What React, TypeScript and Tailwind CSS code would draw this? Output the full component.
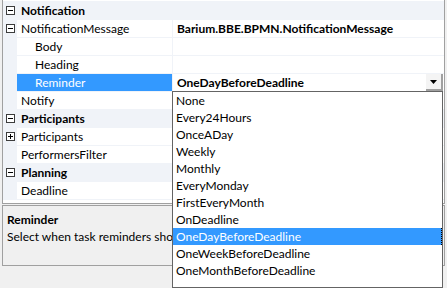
import React from "react";

type Row = {
  kind: "cat" | "prop";
  label: string;
  value?: string;
  glyph?: "minus" | "plus";
  indent?: boolean;
  selected?: boolean;
  dropdown?: boolean;
};

const rows: Row[] = [
  { kind: "cat", label: "Notification", glyph: "minus" },
  { kind: "prop", label: "NotificationMessage", value: "Barium.BBE.BPMN.NotificationMessage", glyph: "minus" },
  { kind: "prop", label: "Body", indent: true },
  { kind: "prop", label: "Heading", indent: true },
  { kind: "prop", label: "Reminder", indent: true, selected: true, value: "OneDayBeforeDeadline", dropdown: true },
  { kind: "prop", label: "Notify" },
  { kind: "cat", label: "Participants", glyph: "minus" },
  { kind: "prop", label: "Participants", glyph: "plus" },
  { kind: "prop", label: "PerformersFilter" },
  { kind: "cat", label: "Planning", glyph: "minus" },
  { kind: "prop", label: "Deadline" },
];

const options = [
  "None",
  "Every24Hours",
  "OnceADay",
  "Weekly",
  "Monthly",
  "EveryMonday",
  "FirstEveryMonth",
  "OnDeadline",
  "OneDayBeforeDeadline",
  "OneWeekBeforeDeadline",
  "OneMonthBeforeDeadline",
];

function Glyph({ type }: { type: "minus" | "plus" }) {
  return (
    <svg width="9" height="9" viewBox="0 0 9 9" className="block">
      <rect x="0.5" y="0.5" width="8" height="8" fill="white" stroke="#3c3c3c" />
      <line x1="2" y1="4.5" x2="7" y2="4.5" stroke="#000" />
      {type === "plus" && <line x1="4.5" y1="2" x2="4.5" y2="7" stroke="#000" />}
    </svg>
  );
}

function GridRow({ row }: { row: Row }) {
  if (row.kind === "cat") {
    return (
      <div className="flex h-[18px] items-center border-t border-[#f0f3f8] bg-[#f0f3f8]">
        <div className="flex w-[14px] shrink-0 justify-center pl-[1px]">
          {row.glyph && <Glyph type={row.glyph} />}
        </div>
        <div className="pl-[4px] font-bold text-black">{row.label}</div>
      </div>
    );
  }
  return (
    <div className="flex h-[18px] border-t border-[#f0f3f8]">
      <div className="flex w-[14px] shrink-0 items-center justify-center bg-[#f0f3f8] pl-[1px]">
        {row.glyph && <Glyph type={row.glyph} />}
      </div>
      <div
        className={
          "flex w-[155px] shrink-0 items-center whitespace-nowrap " +
          (row.indent ? "pl-[18px] " : "pl-[4px] ") +
          (row.selected ? "bg-[#3399ff] text-white" : "bg-white text-black")
        }
      >
        {row.label}
      </div>
      <div className="relative flex flex-1 items-center border-l border-[#f0f3f8] bg-white pl-[4px] font-bold text-black whitespace-nowrap">
        {row.value}
        {row.dropdown && (
          <div className="absolute right-[1px] top-0 flex h-[17px] w-[17px] items-center justify-center border-b-2 border-r-2 border-[#a0a0a0] bg-[#f4f4f4]">
            <svg width="7" height="4" viewBox="0 0 7 4">
              <path d="M0 0h7L3.5 4z" fill="#000" />
            </svg>
          </div>
        )}
      </div>
    </div>
  );
}

export default function App() {
  return (
    <div className="relative h-[288px] w-[447px] overflow-hidden bg-[#f0f0f0] font-['Lato',sans-serif] text-[12px] leading-none">
      <div className="ml-[2px] w-[443px] border-x border-b border-[#a0a0a0] bg-white">
        <div className="h-[1px] bg-white" />
        {rows.map((r, i) => (
          <GridRow key={i} row={r} />
        ))}
        <div className="h-[4px] border-t border-[#f0f3f8] bg-white" />
      </div>

      <div className="ml-[2px] mt-[1px] h-[61px] w-[443px] border border-[#a0a0a0] bg-[#f0f0f0] px-[4px] pt-[8px] text-black">
        <div className="font-bold">Reminder</div>
        <div className="mt-[5px] whitespace-nowrap">Select when task reminders should be sent.</div>
      </div>

      {/* open dropdown list */}
      <div className="absolute left-[172px] top-[91px] h-[197px] w-[271px] border border-[#646464] bg-white">
        {options.map((o) => (
          <div
            key={o}
            className={
              "flex h-[17px] items-center pl-[3px] " +
              (o === "OneDayBeforeDeadline"
                ? "border-r border-dotted border-black bg-[#3399ff] text-white"
                : "text-black")
            }
          >
            {o}
          </div>
        ))}
      </div>
    </div>
  );
}
